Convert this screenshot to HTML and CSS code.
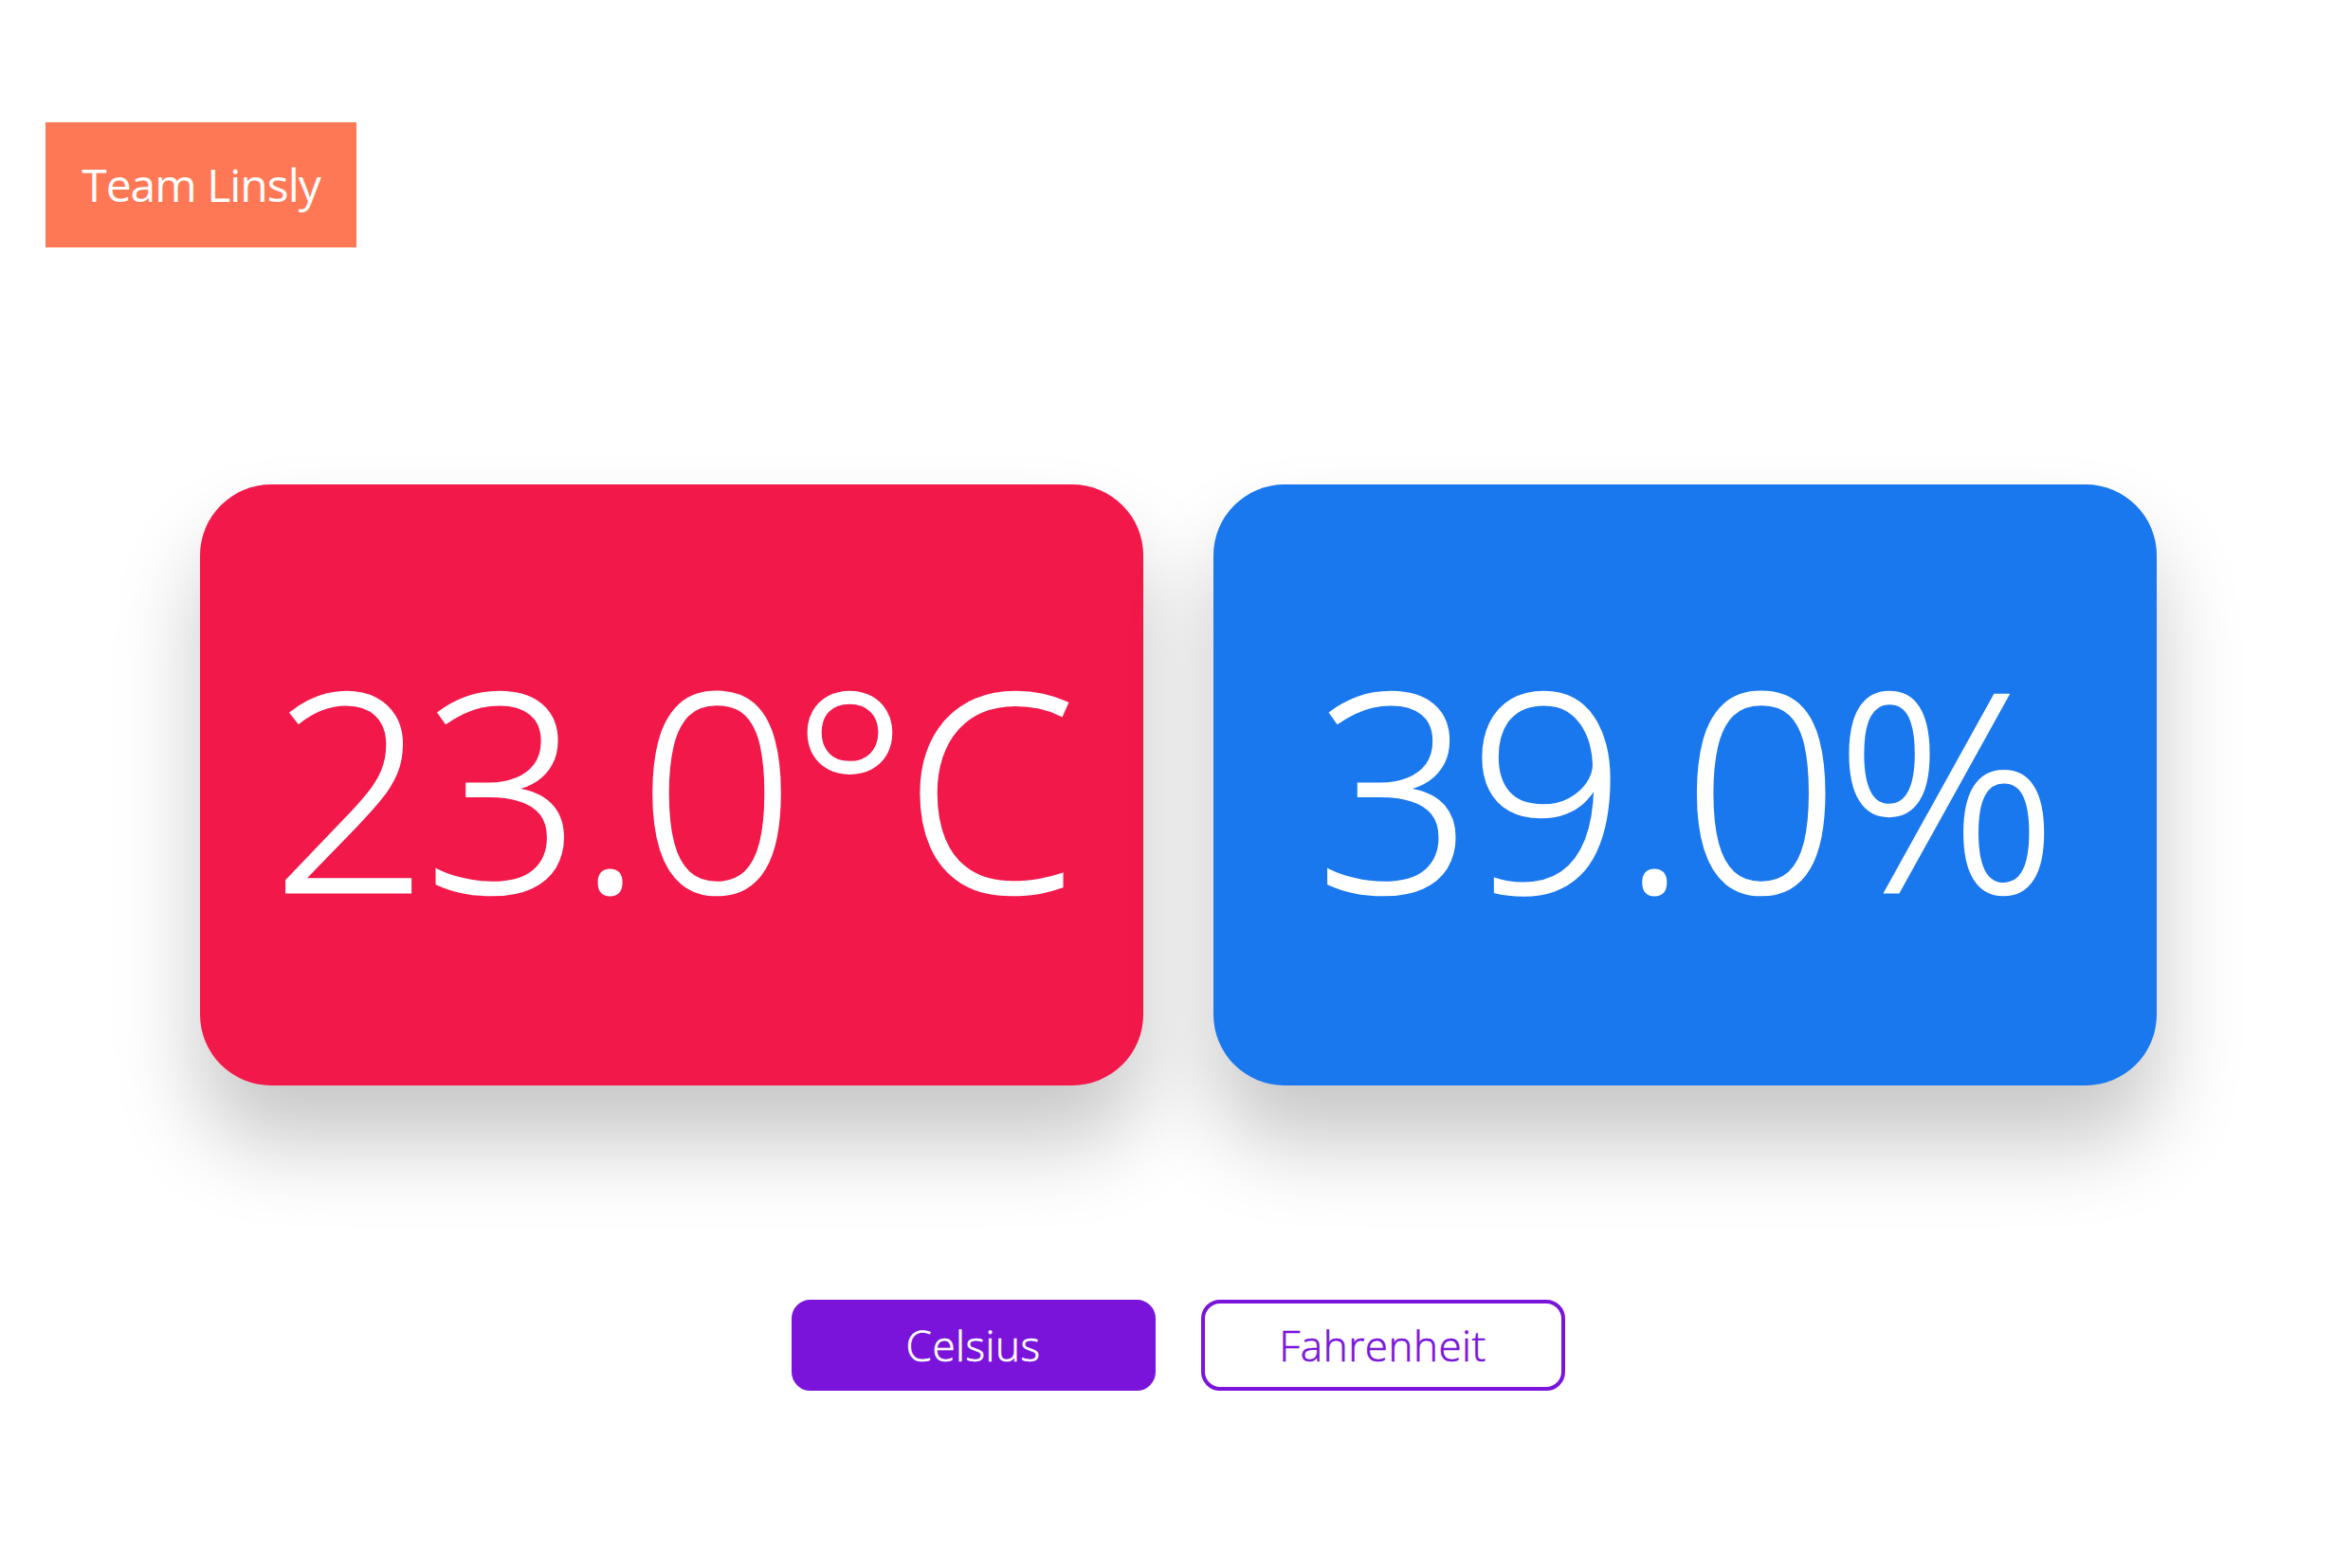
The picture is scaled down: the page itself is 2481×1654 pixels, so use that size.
FILE: index.html
```html
<!DOCTYPE html>
<html>
<head>
<meta charset="utf-8">
<link rel="stylesheet" href="styles.css">
</head>
<body>
<header class="top">
  <div class="team">Team Linsly</div>
</header>
<main class="cards">
  <div class="card card-temp"><span class="value">23.0°C</span></div>
  <div class="card card-hum"><span class="value">39.0%</span></div>
</main>
<nav class="units">
  <button class="unit unit-active">Celsius</button>
  <button class="unit">Fahrenheit</button>
</nav>
</body>
</html>
```
FILE: styles.css
```css
html, body {
  margin: 0;
  padding: 0;
  background: #ffffff;
  font-family: "Open Sans", "Noto Sans", sans-serif;
  font-weight: 400;
}
.top {
  padding: 129px 0 0 48px;
}
.team {
  display: inline-block;
  width: 328px;
  height: 132px;
  box-sizing: border-box;
  background: #ff7855;
  color: #ffffff;
  font-size: 48px;
  letter-spacing: -1px;
  line-height: 132px;
  text-align: center;
}
.cards {
  display: flex;
  justify-content: center;
  gap: 74px;
  margin-top: 250px;
  padding-left: 4px;
}
.card {
  width: 995px;
  height: 634px;
  border-radius: 75px;
  display: flex;
  align-items: center;
  justify-content: center;
  color: #ffffff;
  box-shadow: 0 60px 90px rgba(0, 0, 0, 0.22);
}
.card-temp { background: #f2184a; }
.card-hum { background: #1a78ee; }
.value {
  font-size: 291px;
  font-weight: 300;
  letter-spacing: -5px;
  line-height: 1;
  -webkit-text-stroke: 3px #ffffff;
}
.units {
  display: flex;
  justify-content: center;
  gap: 48px;
  margin-top: 226px;
  padding-left: 4px;
}
.unit {
  width: 384px;
  height: 96px;
  border-radius: 20px;
  border: 4px solid #7a14da;
  background: #ffffff;
  color: #7a14da;
  font-family: "Open Sans", "Noto Sans", sans-serif;
  font-weight: 300;
  font-size: 44px;
  letter-spacing: 0.5px;
  -webkit-text-stroke: 0.6px currentColor;
  padding: 0;
}
.unit-active {
  background: #7a14da;
  color: #ffffff;
}
```
